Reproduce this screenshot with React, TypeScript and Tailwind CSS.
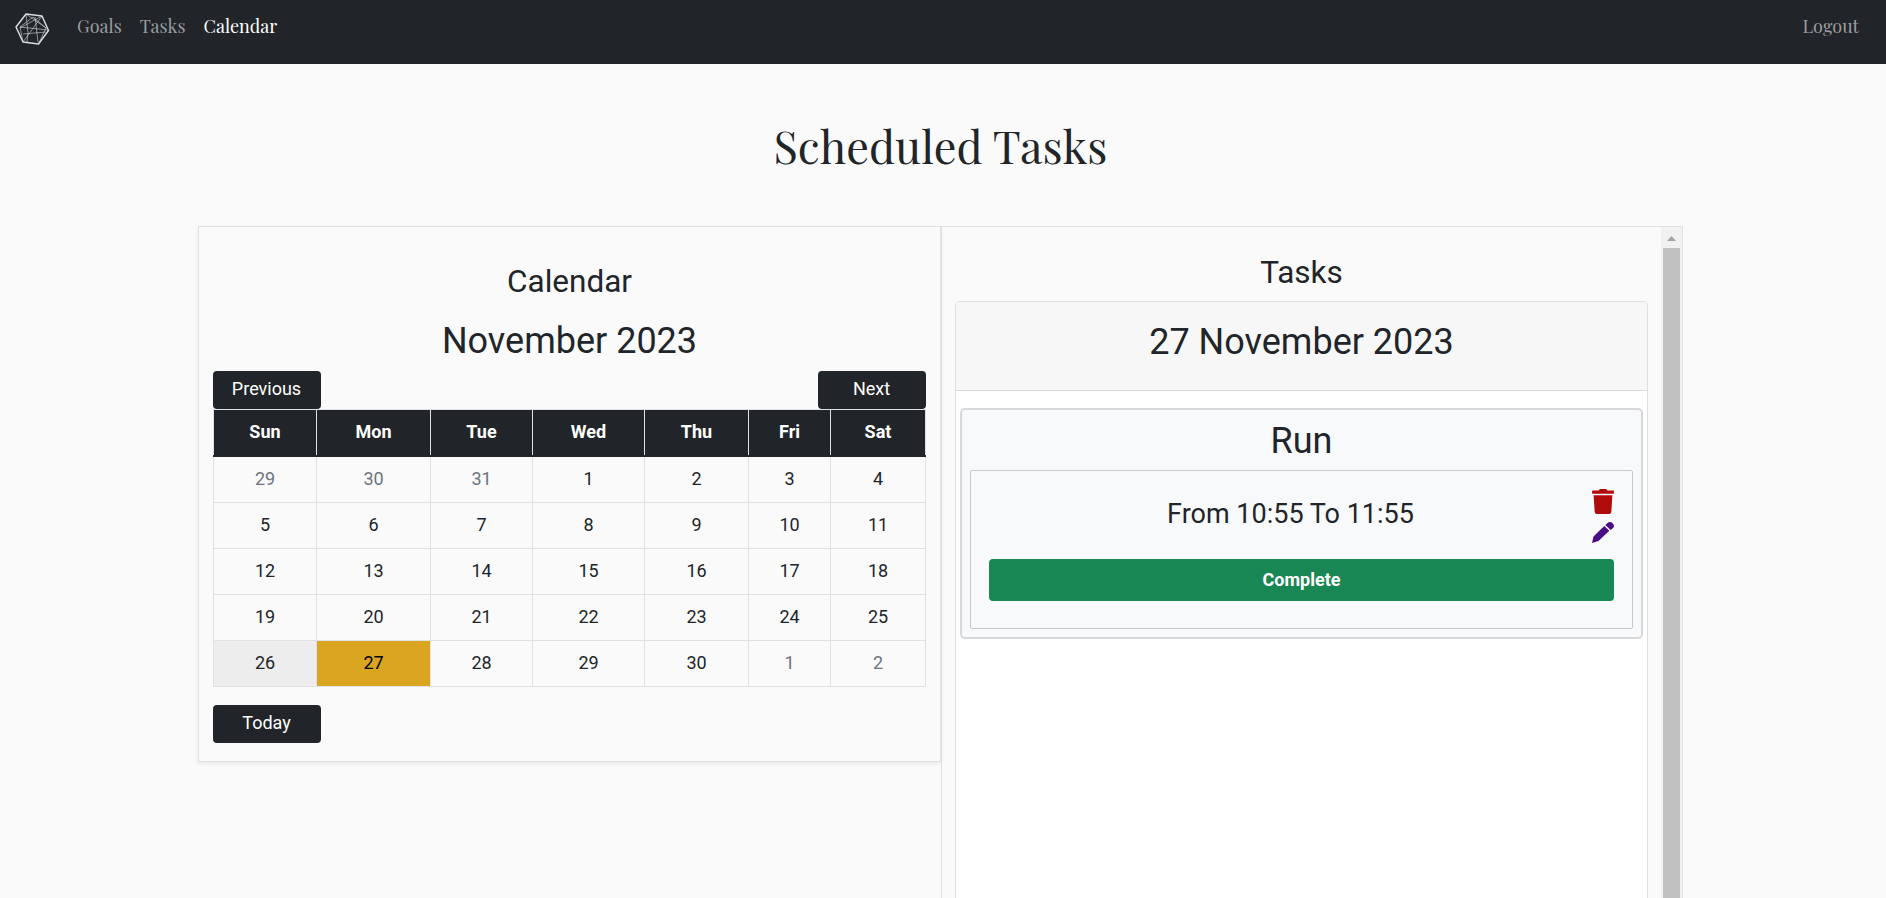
import { FaTrash } from "react-icons/fa";

const dark = "bg-[#212529]";
const days = ["Sun", "Mon", "Tue", "Wed", "Thu", "Fri", "Sat"];
const weeks = [
  [29, 30, 31, 1, 2, 3, 4],
  [5, 6, 7, 8, 9, 10, 11],
  [12, 13, 14, 15, 16, 17, 18],
  [19, 20, 21, 22, 23, 24, 25],
  [26, 27, 28, 29, 30, 1, 2],
];
const cols = "grid grid-cols-[103px_114px_102px_112px_104px_82px_95px] border-l border-[#dee2e6]";

function cellStyle(week: number, day: number) {
  if ((week === 0 && day < 3) || (week === 4 && day > 4)) return "text-[#6c757d]";
  if (week === 4 && day === 0) return "bg-[#ededed]";
  if (week === 4 && day === 1) return "bg-[#daa520] text-black";
  return "";
}

function DarkButton({ label }: { label: string }) {
  return (
    <button className={`${dark} h-[38px] w-[108px] rounded-[4px] pb-[3px] pr-[1px] text-[18px] text-white`}>{label}</button>
  );
}

function Logo() {
  return (
    <svg className="mt-[13px] h-[33px] w-[35px]" viewBox="0 0 35 33" fill="none" stroke="#d9dbdc" strokeLinejoin="round">
      <path d="M11 1 L27 3 L33.500 17.500 L23.500 31 L8 29 L1 14 Z" strokeWidth="1.500" />
      <path d="M11 1 L13 19.500 L12 29 M27 3 L5 15 M18 4 L5 14 L8 29 L27 3 M18 4 L31 15 L23.500 31 M5 14 L33 17 M8 21 L31 19 M20 4 L23 29 M11 1 L31 15" strokeWidth=".6" />
    </svg>
  );
}

export default function App() {
  return (
    <div className="flex h-[898px] w-full flex-col overflow-hidden bg-[#fafafa] font-[Roboto,sans-serif] text-[18px] text-[#212529]">
      <nav className={`${dark} flex h-16 shrink-0 items-start pl-[15px] pr-[27px] font-['Playfair_Display','Liberation_Serif',serif] text-[18px] leading-[52px] text-[#9b9d9f]`}>
        <Logo />
        <a className="ml-[27px]">Goals</a>
        <a className="ml-[18px]">Tasks</a>
        <a className="ml-[18px] text-white">Calendar</a>
        <a className="ml-auto">Logout</a>
      </nav>
      <h1 className="h-[162px] w-[1881px] shrink-0 pt-[52px] text-center font-['Playfair_Display','Liberation_Serif',serif] text-[45px] leading-[58px]">
        Scheduled Tasks
      </h1>
      <main className="ml-[198px] flex min-h-0 w-[1485px] flex-1 items-start">
        <section className="h-[536px] w-[743px] border border-[#dee2e6] px-[14px] pt-[35px] shadow-[0_2px_4px_rgba(0,0,0,0.075)]">
          <h2 className="text-center text-[31.5px] leading-[40px]">Calendar</h2>
          <h2 className="mt-[17px] text-center text-[36px] leading-[44px]">November 2023</h2>
          <div className="mt-[8px] flex justify-between">
            <DarkButton label="Previous" />
            <DarkButton label="Next" />
          </div>
          <div className={`${cols} ${dark} h-[46px] border-t font-bold text-white`}>
            {days.map((d) => (
              <div key={d} className="border-r border-[#dee2e6] text-center leading-[43px]">{d}</div>
            ))}
          </div>
          <div className={`${dark} h-[2px]`} />
          {weeks.map((week, w) => (
            <div key={w} className={cols}>
              {week.map((n, d) => (
                <div key={d} className={`h-[46px] border-b border-r border-[#dee2e6] text-center leading-[44px] ${cellStyle(w, d)}`}>{n}</div>
              ))}
            </div>
          ))}
          <div className="mt-[18px]"><DarkButton label="Today" /></div>
        </section>
        <section className="flex h-full w-[742px] border border-b-0 border-[#dee2e6]">
          <div className="flex min-w-0 flex-1 flex-col px-[13px] pt-[26px]">
            <h2 className="text-center text-[31.5px] leading-[40px]">Tasks</h2>
            <div className="mt-[8px] flex-1 rounded-t-[5px] border border-b-0 border-[#dfdfdf] bg-white">
              <h3 className="h-[89px] rounded-t-[4px] border-b border-[#d9d9d9] bg-[#f7f7f7] pt-[18px] text-center text-[36px] leading-[44px]">
                27 November 2023
              </h3>
              <article className="mx-[4px] mt-[17px] h-[231px] rounded-[5px] border-2 border-[#d7d8d9] bg-[#f8f9fb] px-[8px] pt-[9px]">
                <h3 className="h-[51px] text-center text-[36px] leading-[44px]">Run</h3>
                <div className="h-[159px] rounded-[2px] border border-[#c6c8ca] px-[18px] pt-[18px]">
                  <div className="flex h-[70px]">
                    <p className="flex-1 pt-[7px] text-center text-[27px] leading-[36px]">From 10:55 To 11:55</p>
                    <div className="flex w-[22px] flex-col">
                      <FaTrash className="h-[25px] w-[22px] text-[#b00b0b]" />
                      <svg className="mt-[8px] h-[21px] w-[22px]" viewBox="0 0 22 21" fill="#4b0c87">
                        <path d="M0 21 L1.500 14.500 L12.300 4 L17.300 8.700 L6.500 19 Z M13.300 3 L15.500 1 Q18.300 -1 20.800 1.500 Q23.200 4 20.800 6.200 L18.600 8 Z" />
                      </svg>
                    </div>
                  </div>
                  <button className="h-[42px] w-full rounded-[4px] bg-[#198754] pb-[2px] font-bold text-white">Complete</button>
                </div>
              </article>
            </div>
          </div>
          <div className="flex w-[21px] flex-col items-center bg-[#f1f1f1]">
            <svg className="h-[21px] w-[9px] shrink-0" viewBox="0 0 9 21" fill="#a3a3a3"><path d="M4.500 9 L9 14 H0 Z" /></svg>
            <div className="w-[17px] flex-1 bg-[#c1c1c1]" />
          </div>
        </section>
      </main>
    </div>
  );
}
